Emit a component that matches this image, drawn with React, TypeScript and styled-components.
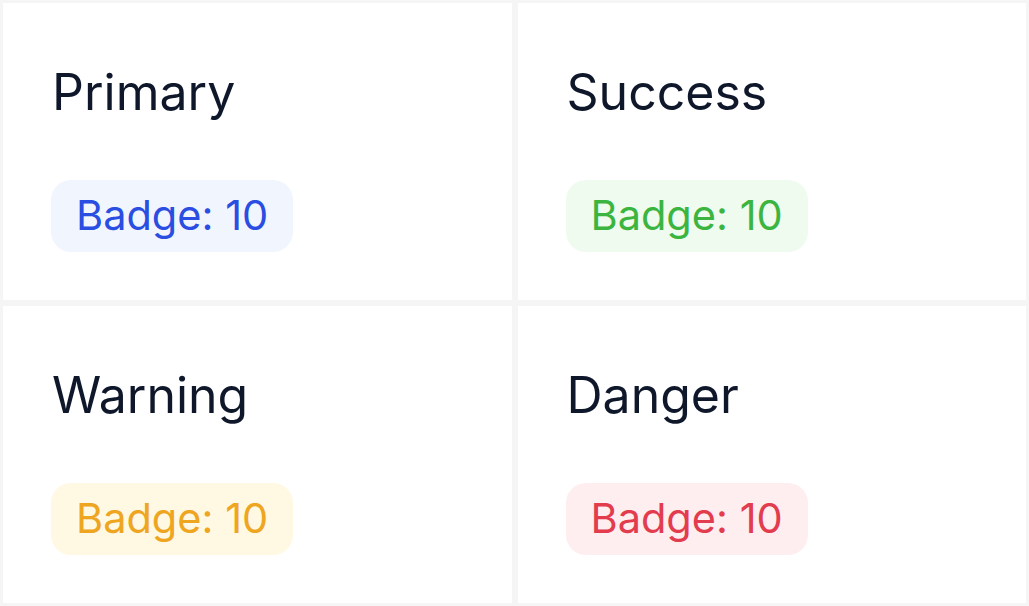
import React from "react";
import styled, { createGlobalStyle } from "styled-components";

const GlobalStyle = createGlobalStyle`
  html, body {
    margin: 0;
    padding: 0;
    background: #f5f5f5;
  }
  body {
    font-family: Inter, "Noto Sans", sans-serif;
  }
`;

const Grid = styled.div`
  display: grid;
  grid-template-columns: 1fr 1fr;
  grid-auto-rows: 297px;
  gap: 6px;
  padding: 3px;
  width: 1029px;
  height: 606px;
  box-sizing: border-box;
  background: #f5f5f5;
`;

const Card = styled.div`
  background: #ffffff;
  padding: 59px 48px 48px;
  box-sizing: border-box;
  display: flex;
  flex-direction: column;
  align-items: flex-start;
`;

const Title = styled.div`
  font-size: 50px;
  line-height: 60px;
  font-weight: 400;
  color: #0f172a;
  margin-left: 1px;
  white-space: nowrap;
`;

type Tone = "primary" | "success" | "warning" | "danger";

const tones: Record<Tone, { fg: string; bg: string }> = {
  primary: { fg: "#2a4de2", bg: "#f1f5fe" },
  success: { fg: "#3cb540", bg: "#effbef" },
  warning: { fg: "#eea520", bg: "#fff8e3" },
  danger: { fg: "#e23c4e", bg: "#feeef0" },
};

const Badge = styled.span<{ $tone: Tone }>`
  margin-top: 58px;
  display: inline-flex;
  align-items: center;
  height: 72px;
  padding: 0 25px;
  box-sizing: border-box;
  border-radius: 20px;
  font-size: 41.5px;
  line-height: 1;
  white-space: nowrap;
  color: ${(p) => tones[p.$tone].fg};
  background: ${(p) => tones[p.$tone].bg};
`;

const items: { label: string; tone: Tone }[] = [
  { label: "Primary", tone: "primary" },
  { label: "Success", tone: "success" },
  { label: "Warning", tone: "warning" },
  { label: "Danger", tone: "danger" },
];

export default function App() {
  return (
    <>
      <GlobalStyle />
      <Grid>
        {items.map((it) => (
          <Card key={it.label}>
            <Title>{it.label}</Title>
            <Badge $tone={it.tone}>Badge: 10</Badge>
          </Card>
        ))}
      </Grid>
    </>
  );
}
